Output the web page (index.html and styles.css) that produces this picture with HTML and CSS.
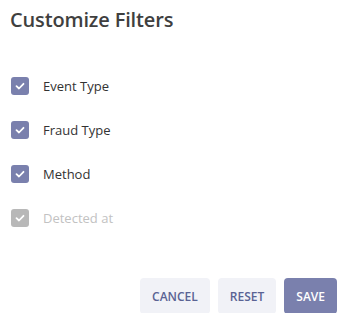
FILE: index.html
```html
<!DOCTYPE html>
<html>
<head>
<meta charset="utf-8">
<link rel="stylesheet" href="styles.css">
</head>
<body>
<div class="dialog">
  <h1 class="title">Customize Filters</h1>
  <ul class="options">
    <li class="option"><span class="box"><svg viewBox="0 0 18 18" width="18" height="18"><path d="M5.5 9.2 L8 11.5 L12.5 6.8" fill="none" stroke="#fff" stroke-width="1.8" stroke-linecap="round" stroke-linejoin="round"/></svg></span><span class="label">Event Type</span></li>
    <li class="option"><span class="box"><svg viewBox="0 0 18 18" width="18" height="18"><path d="M5.5 9.2 L8 11.5 L12.5 6.8" fill="none" stroke="#fff" stroke-width="1.8" stroke-linecap="round" stroke-linejoin="round"/></svg></span><span class="label">Fraud Type</span></li>
    <li class="option"><span class="box"><svg viewBox="0 0 18 18" width="18" height="18"><path d="M5.5 9.2 L8 11.5 L12.5 6.8" fill="none" stroke="#fff" stroke-width="1.8" stroke-linecap="round" stroke-linejoin="round"/></svg></span><span class="label">Method</span></li>
    <li class="option disabled"><span class="box"><svg viewBox="0 0 18 18" width="18" height="18"><path d="M5.5 9.2 L8 11.5 L12.5 6.8" fill="none" stroke="#fff" stroke-width="1.8" stroke-linecap="round" stroke-linejoin="round"/></svg></span><span class="label">Detected at</span></li>
  </ul>
  <div class="actions">
    <button class="btn">CANCEL</button>
    <button class="btn">RESET</button>
    <button class="btn primary">SAVE</button>
  </div>
</div>
</body>
</html>
```
FILE: styles.css
```css
html, body { margin: 0; padding: 0; background: #fff; }
body { width: 348px; height: 313px; overflow: hidden; font-family: "Open Sans", sans-serif; }
.dialog { padding: 6px 11px 0 10px; }
.title { margin: 0; font-size: 20px; font-weight: 600; color: #3f3f3f; line-height: 28px; letter-spacing: -0.15px; }
.options { list-style: none; margin: 43px 0 0 1px; padding: 0; display: flex; flex-direction: column; gap: 26px; }
.option { display: flex; align-items: center; height: 18px; }
.box { width: 18px; height: 18px; border-radius: 3px; background: #7a80ad; display: flex; }
.label { margin-left: 14px; font-size: 13px; color: #333; }
.disabled .box { background: #b8b8b8; }
.disabled .label { color: #c2c2c2; }
.actions { display: flex; justify-content: flex-end; gap: 8px; margin-top: 51px; }
.btn { border: 0; border-radius: 4px; height: 36px; padding: 0 12px; background: #f1f2f7; color: #5a6394; font-family: "Open Sans", sans-serif; font-weight: 600; font-size: 12px; }
.btn.primary { background: #7a80ad; color: #fff; }
```
